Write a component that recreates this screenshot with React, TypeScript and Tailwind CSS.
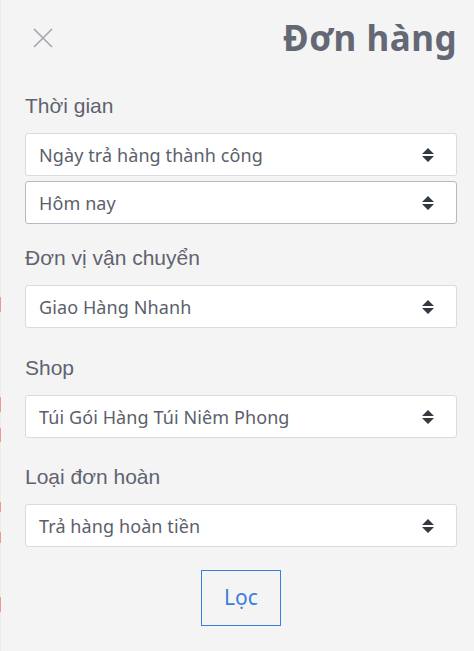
import React from "react";

const Arrows = () => (
  <svg width="12" height="14" viewBox="0 0 12 14" className="shrink-0">
    <path d="M6 0L0 6h12z M6 14L0 8h12z" fill="#343a40" />
  </svg>
);

const Select = ({ text, focused = false }: { text: string; focused?: boolean }) => (
  <div
    className={`flex h-[43px] items-center justify-between rounded-[3px] border bg-white pl-[13px] pr-[22px] ${
      focused ? "border-[#b3bac5]" : "border-[#d9dbe0]"
    }`}
  >
    <span className="text-[18px] leading-[24px] tracking-[0.1px] text-[#5b5f6b]" style={{ fontFamily: '"Noto Sans", sans-serif' }}>
      {text}
    </span>
    <Arrows />
  </div>
);

const Label = ({ text, className = "" }: { text: string; className?: string }) => (
  <div
    className={`mb-[15px] text-[21px] leading-[24px] text-[#5f6370] ${className}`}
    style={{ fontFamily: '"Liberation Sans", Arial, sans-serif' }}
  >
    {text}
  </div>
);

const Strip = () => {
  const segs: [number, string][] = [
    [297, "bg-[#ececec]"],
    [15, "bg-[#ec9a94]"],
    [85, "bg-[#ececec]"],
    [15, "bg-[#ec9a94]"],
    [16, "bg-[#ececec]"],
    [14, "bg-[#ec9a94]"],
    [60, "bg-[#ececec]"],
    [10, "bg-[#ec9a94]"],
    [20, "bg-[#ececec]"],
    [11, "bg-[#ec9a94]"],
    [54, "bg-[#ececec]"],
    [15, "bg-[#ec9a94]"],
    [39, "bg-[#ececec]"],
  ];
  return (
    <div className="flex w-px shrink-0 flex-col">
      {segs.map(([h, c], i) => (
        <div key={i} className={c} style={{ height: h }} />
      ))}
    </div>
  );
};

export default function App() {
  return (
    <div className="flex h-[651px] w-[474px] overflow-hidden bg-[#f4f4f4]">
      <Strip />
      <div className="flex flex-1 flex-col pl-[24px] pr-[17px]">
        <div className="flex h-[40px] items-center justify-between mt-[18px]">
          <svg width="20" height="20" viewBox="0 0 20 20" className="ml-[8px]">
            <path d="M1 1L19 19M19 1L1 19" stroke="#a4a6ab" strokeWidth="1.6" />
          </svg>
          <h1
            className="text-[35px] font-bold leading-[40px] tracking-[0.5px] text-[#646875]"
            style={{ fontFamily: '"Noto Sans", sans-serif' }}
          >
            Đơn hàng
          </h1>
        </div>

        <Label text="Thời gian" className="mt-[36px]" />
        <div className="flex flex-col gap-[5px]">
          <Select text="Ngày trả hàng thành công" />
          <Select text="Hôm nay" focused />
        </div>

        <Label text="Đơn vị vận chuyển" className="mt-[22px]" />
        <Select text="Giao Hàng Nhanh" />

        <Label text="Shop" className="mt-[28px]" />
        <Select text="Túi Gói Hàng Túi Niêm Phong" />

        <Label text="Loại đơn hoàn" className="mt-[27px]" />
        <Select text="Trả hàng hoàn tiền" />

        <div className="mt-[23px] flex justify-center">
          <button
            className="flex h-[56px] w-[80px] items-center justify-center border border-[#3a7fdb] bg-transparent text-[21px] text-[#3a7fdb]"
            style={{ fontFamily: '"Noto Sans", sans-serif' }}
          >
            Lọc
          </button>
        </div>
      </div>
    </div>
  );
}
